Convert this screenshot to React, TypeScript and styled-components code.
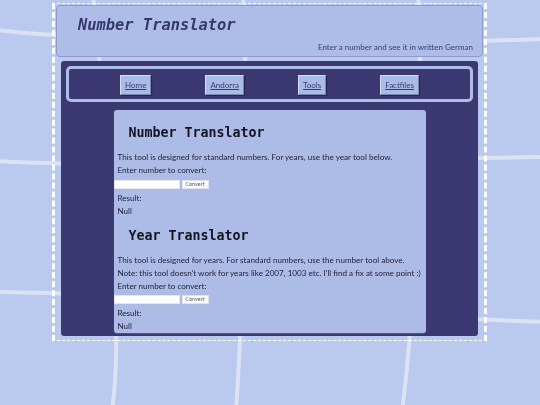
import styled, { createGlobalStyle } from "styled-components";

const nav = ['Home', 'Andorra', 'Tools', 'Factfiles']

// style
const GlobalStyle = createGlobalStyle`
  html, body {
    margin: 0;
    padding: 0;
    background: #b9caee;
  }
  body {
    font-family: Lato, "Noto Sans", sans-serif;
    color: #23223a;
  }
`
const Backdrop = styled.svg`
  position: fixed;
  top: 0;
  left: 0;
  width: 540px;
  height: 405px;
  z-index: 0;
  pointer-events: none;
  path {
    fill: none;
    stroke: #dbe2f3;
    stroke-width: 4;
  }
`
const Page = styled.div`
  position: relative;
  z-index: 1;
  box-sizing: border-box;
  width: 435px;
  margin: 3px 0 0 52px;
  padding: 1px 1px 4px;
  border-style: dashed;
  border-color: #ffffff;
  border-width: 1px 3px;
`
const Header = styled.header`
  box-sizing: border-box;
  height: 52px;
  padding: 9px 9px 0 21px;
  background: #aebde8;
  border: 1px solid #8e9acb;
  border-radius: 4px;
  display: flex;
  flex-direction: column;
`
const SiteTitle = styled.h1`
  margin: 0;
  font-family: "DejaVu Sans Mono", "Liberation Mono", monospace;
  font-style: italic;
  font-weight: bold;
  font-size: 15.4px;
  line-height: 20px;
  color: #38366e;
`
const Tagline = styled.p`
  margin: 6px 0 0;
  text-align: right;
  font-size: 8px;
  line-height: 12px;
  color: #3c3a72;
`
const Panel = styled.main`
  margin: 4px 5px 0;
  padding: 5px 5px 3px;
  background: #3c3972;
  border-radius: 3px;
  display: flex;
  flex-direction: column;
  align-items: center;
`
const NavBar = styled.nav`
  box-sizing: border-box;
  align-self: stretch;
  height: 36px;
  border: 3px solid #aebde8;
  border-radius: 5px;
  display: flex;
  justify-content: center;
  align-items: center;
  gap: 54px;
`
const NavButton = styled.a`
  box-sizing: border-box;
  height: 20px;
  margin-top: 1px;
  padding: 0 4px;
  display: flex;
  align-items: center;
  background: #abbbe7;
  border: 1px solid;
  border-color: #d6def4 #7c86b4 #7c86b4 #d6def4;
  box-shadow: 1px 1px 1px rgba(20, 20, 50, 0.5);
  font-size: 8px;
  color: #3c3a72;
  text-decoration: underline;
`
const Card = styled.section`
  box-sizing: border-box;
  width: 312px;
  margin-top: 8px;
  padding: 15px 0 0;
  background: #adbce7;
  border-radius: 3px;
  box-shadow: 0 1px 0 #56548f;
`
const ToolTitle = styled.h2<{ $gap?: number }>`
  margin: ${p => p.$gap ?? 0}px 0 10px 15px;
  font-family: "DejaVu Sans Mono", "Liberation Mono", monospace;
  font-weight: bold;
  font-size: 13.3px;
  line-height: 16px;
  color: #141420;
`
const Line = styled.p`
  margin: 0 0 0 4px;
  font-size: 8.1px;
  line-height: 13px;
`
const Form = styled.div<{ $gap: number }>`
  display: flex;
  gap: 2px;
  margin: ${p => p.$gap}px 0 3px;
`
const NumberInput = styled.input`
  box-sizing: border-box;
  width: 66px;
  height: 9px;
  margin: 0;
  padding: 0;
  border: 1px solid #e4e7f2;
  background: #ffffff;
`
const ConvertButton = styled.button`
  box-sizing: border-box;
  width: 27px;
  height: 9px;
  margin: 0;
  padding: 0;
  border: 1px solid #dfe2ee;
  background: #ffffff;
  font-family: Lato, sans-serif;
  font-size: 5.5px;
  line-height: 7px;
  color: #555566;
`

function App() {
  return (
    <>
      <GlobalStyle />
      <Backdrop viewBox="0 0 540 405">
        <path d="M-5,30 C120,44 400,44 545,39" />
        <path d="M-5,161 C150,170 400,158 545,157" />
        <path d="M-5,292 C120,292 400,318 545,322" />
        <path d="M93,-5 C102,80 126,320 112,410" />
        <path d="M243,-5 C249,80 242,330 236,410" />
        <path d="M418,-5 C424,80 414,330 402,410" />
      </Backdrop>
      <Page>
        <Header>
          <SiteTitle>Number Translator</SiteTitle>
          <Tagline>Enter a number and see it in written German</Tagline>
        </Header>
        <Panel>
          <NavBar>
            {nav.map(item => <NavButton key={item}>{item}</NavButton>)}
          </NavBar>
          <Card>
            <ToolTitle>Number Translator</ToolTitle>
            <Line>This tool is designed for standard numbers. For years, use the year tool below.</Line>
            <Line>Enter number to convert:</Line>
            <Form $gap={3}>
              <NumberInput type="text" />
              <ConvertButton>Convert</ConvertButton>
            </Form>
            <Line>Result:</Line>
            <Line>Null</Line>
            <ToolTitle $gap={10}>Year Translator</ToolTitle>
            <Line>This tool is designed for years. For standard numbers, use the number tool above.</Line>
            <Line>Note: this tool doesn't work for years like 2007, 1003 etc. I'll find a fix at some point :)</Line>
            <Line>Enter number to convert:</Line>
            <Form $gap={2}>
              <NumberInput type="text" />
              <ConvertButton>Convert</ConvertButton>
            </Form>
            <Line>Result:</Line>
            <Line>Null</Line>
          </Card>
        </Panel>
      </Page>
    </>
  )
}

export default App
